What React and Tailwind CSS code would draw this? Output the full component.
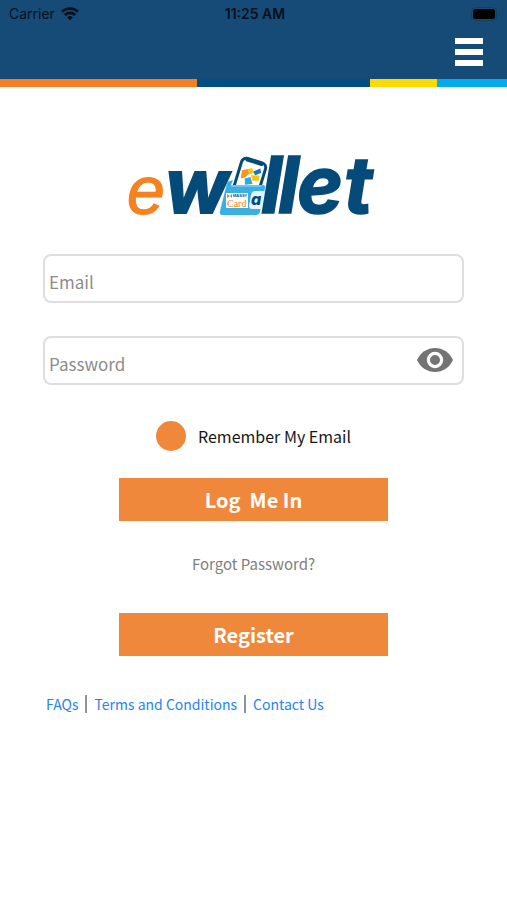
const navy = "#044b79";

function WifiIcon() {
  return (
    <svg viewBox="0 0 18 14" className="h-[14px] w-[18px]" fill="none" stroke="#07101a" aria-hidden="true">
      <path d="M1 4.8a11.4 11.4 0 0 1 16 0" strokeWidth="2.7" />
      <path d="M3.9 8a7.3 7.3 0 0 1 10.2 0" strokeWidth="2.6" />
      <path d="M9 13.2 6.2 10.4a4 4 0 0 1 5.6 0Z" fill="#07101a" stroke="none" />
    </svg>
  );
}

function BatteryIcon() {
  return (
    <svg viewBox="0 0 30 14" className="h-[14px] w-[30px]" aria-hidden="true">
      <rect x="0.5" y="0.5" width="25" height="13" rx="4" fill="none" stroke="#123f60" />
      <rect x="2" y="2" width="22" height="10" rx="2.5" fill="#000" />
      <path d="M27.5 5v4c1.6-.6 1.6-3.4 0-4Z" fill="#123f60" />
    </svg>
  );
}

function Header() {
  return (
    <header>
      <div className="bg-[#164b78] font-['Inter',sans-serif] text-[#07101a]">
        <div className="grid h-7 grid-cols-3 items-center pr-1.5 pl-[9px] text-sm">
          <div className="flex items-center gap-1.5">
            <span>Carrier</span>
            <WifiIcon />
          </div>
          <span className="text-center font-semibold">11:25 AM</span>
          <div className="flex justify-end">
            <BatteryIcon />
          </div>
        </div>
        <div className="flex h-[51px] justify-end pt-[10px] pr-6">
          <button type="button" aria-label="Menu" className="flex h-7 w-7 flex-col justify-between">
            <span className="block h-1.5 w-full bg-white" />
            <span className="block h-1.5 w-full bg-white" />
            <span className="block h-1.5 w-full bg-white" />
          </button>
        </div>
      </div>
      <div className="grid h-2 grid-cols-[197fr_173fr_67fr_70fr]">
        <span className="bg-[#f57f24]" />
        <span className="bg-[#004f84]" />
        <span className="bg-[#fddb00]" />
        <span className="bg-[#05a9ee]" />
      </div>
    </header>
  );
}

function Logo() {
  return (
    <svg viewBox="-6 -20 262 104" className="h-[104px] w-[262px]" role="img" aria-label="ewallet">
      <text
        x="-2"
        y="59"
        fontSize="68"
        fontStyle="italic"
        fontFamily="'Liberation Sans', sans-serif"
        fill="#f58220"
        stroke="#f58220"
        strokeWidth="1.2"
      >
        e
      </text>
      <text
        x="36"
        y="58"
        fontSize="75"
        fontStyle="italic"
        fontWeight="700"
        fontFamily="Inter, sans-serif"
        fill={navy}
        stroke={navy}
        strokeWidth="2"
      >
        w
      </text>
      {/* phone */}
      <g transform="translate(114 2) rotate(17)">
        <rect x="0" y="0" width="25" height="42" rx="5" fill="#fff" stroke={navy} strokeWidth="3" />
        <path d="M5 1.500h15" stroke={navy} strokeWidth="3.500" strokeLinecap="round" />
        <path d="M3 13l5-3 3 4-3 5-4 2Z" fill="#f7941d" />
        <path d="M8 10l4-2 3 4-4 3Z" fill="#ffc20e" />
        <path d="M14 11l6-5 2 4-5 4Z" fill="#1c75bc" />
        <path d="M13 15l8-2 1 5-6 2Z" fill="#ffc20e" />
        <path d="M8 20l5-3 4 6-7 3Z" fill="#29abe2" />
      </g>
      {/* wallet */}
      <path d="M98 28q1-2 3-2l3-1-2 5h32q3 0 2 3l-5 24q-1 3-4 3H94q-4 0-3-4Z" fill="#3aafe4" />
      <path d="M102 31h31" stroke="#9fdcf5" strokeWidth="1" />
      <path d="M126 36h10l-3 18H123q-3 0-3-3l2-11q1-4 4-4Z" fill="#e4f5fc" />
      <rect x="97" y="38" width="22" height="15" fill="#fff" />
      <path d="M98 39l3 2-3 2Z" fill="#f58220" />
      <path d="M103 39l-2 2 2 2Z" fill="#29abe2" />
      <text x="104" y="42" fontSize="4" fontWeight="bold" fontFamily="'Liberation Sans', sans-serif" fill={navy}>MASSY</text>
      <text x="98" y="52" fontSize="10" fontFamily="'Liberation Serif', serif" fill="#f58220">Card</text>
      <text x="122" y="50" fontSize="16" fontStyle="italic" fontWeight="800" fontFamily="Inter, sans-serif" fill={navy}>a</text>
      <g
        fontFamily="Inter, sans-serif"
        fontStyle="italic"
        fontSize="78"
        fontWeight="700"
        fill={navy}
        stroke={navy}
        strokeWidth="1.5"
      >
        <text x="132" y="58">l</text>
        <text x="149" y="58">l</text>
        <text x="168" y="58">e</text>
        <text x="215" y="58">t</text>
      </g>
    </svg>
  );
}

function EyeIcon() {
  return (
    <svg viewBox="0 0 36 24" className="h-6 w-9" aria-hidden="true">
      <path d="M0 12C3.2 4.8 10 0 18 0s14.800 4.800 18 12c-3.200 7.200-10 12-18 12S3.200 19.200 0 12Z" fill="#747474" />
      <circle cx="18" cy="12" r="6.600" fill="#747474" stroke="#fff" strokeWidth="3.200" />
    </svg>
  );
}

const fieldClass =
  "block h-[49px] w-full rounded-lg border-2 border-[#dedede] bg-white pt-1.5 pl-1 text-[17px] text-[#333333] placeholder:text-[#8c8c8c] outline-none";
const buttonClass =
  "h-[43px] w-[269px] max-w-full bg-[#f0883c] text-xl leading-8 font-bold whitespace-pre text-white";

export default function App() {
  return (
    <div className="min-h-screen bg-white font-['Noto_Sans_CJK_SC',sans-serif]">
      <Header />
      <main className="px-[43px] pt-12">
        <h1 className="flex justify-center">
          <Logo />
        </h1>
        <form className="mt-[15px] flex flex-col items-center" onSubmit={(e) => e.preventDefault()}>
          <input type="email" aria-label="Email" placeholder="Email" className={fieldClass} />
          <div className="relative mt-[33px] w-full">
            <input type="password" aria-label="Password" placeholder="Password" className={fieldClass} />
            <button type="button" aria-label="Show password" className="absolute top-3 right-[11px]">
              <EyeIcon />
            </button>
          </div>
          <label className="mt-[35px] flex items-center gap-3 text-base leading-8 text-[#171717]">
            <input type="checkbox" className="size-[30px] appearance-none rounded-full bg-[#f0883c]" />
            Remember My Email
          </label>
          <button type="submit" className={`mt-[26px] ${buttonClass}`}>{"Log  Me In"}</button>
          <a href="#forgot" className="mt-[27px] text-[15px] leading-8 text-[#808080]">Forgot Password?</a>
          <button type="button" className={`mt-[33px] ${buttonClass}`}>Register</button>
        </form>
        <nav className="mt-9 flex flex-wrap items-center gap-x-[7px] pl-[3px] text-sm leading-6 text-[#2585ee]">
          <a href="#faqs">FAQs</a>
          <span className="h-[18px] w-0.5 bg-[#8e9399]" />
          <a href="#terms">Terms and Conditions</a>
          <span className="h-[18px] w-0.5 bg-[#8e9399]" />
          <a href="#contact">Contact Us</a>
        </nav>
      </main>
    </div>
  );
}
